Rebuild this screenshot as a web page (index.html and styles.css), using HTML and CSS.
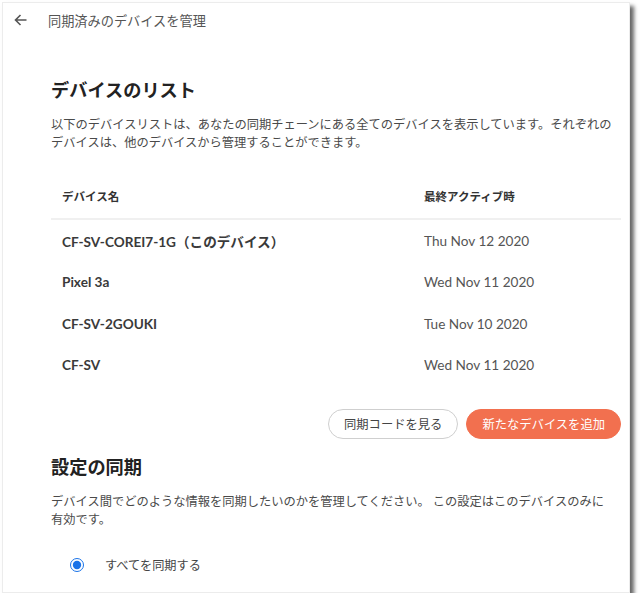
FILE: index.html
```html
<!DOCTYPE html>
<html lang="ja">
<head>
  <meta charset="UTF-8">
  <meta name="viewport" content="width=device-width, initial-scale=1.0">
  <title>同期済みのデバイスを管理</title>

  <link rel="stylesheet" href="styles.css">
</head>
<body>

  <div class="window">
    <header class="topbar">
      <svg class="back" width="13" height="12" viewBox="0 0 13 12">
        <path d="M12.5 6H1.5M6.5 1L1.5 6l5 5" fill="none" stroke="#555" stroke-width="1.6"/>
      </svg>
      <span class="topbar-title">同期済みのデバイスを管理</span>
    </header>

    <main class="content">
      <h2 class="section-title first">デバイスのリスト</h2>
      <p class="lead">以下のデバイスリストは、あなたの同期チェーンにある全てのデバイスを表示しています。それぞれのデバイスは、他のデバイスから管理することができます。</p>

      <table class="devices">
        <thead>
          <tr>
            <th class="col-name">デバイス名</th>
            <th>最終アクティブ時</th>
          </tr>
        </thead>
        <tbody>
          <tr>
            <td class="device-name">CF-SV-COREI7-1G（このデバイス）</td>
            <td class="device-date">Thu Nov 12 2020</td>
          </tr>
          <tr>
            <td class="device-name">Pixel 3a</td>
            <td class="device-date">Wed Nov 11 2020</td>
          </tr>
          <tr>
            <td class="device-name">CF-SV-2GOUKI</td>
            <td class="device-date">Tue Nov 10 2020</td>
          </tr>
          <tr>
            <td class="device-name">CF-SV</td>
            <td class="device-date">Wed Nov 11 2020</td>
          </tr>
        </tbody>
      </table>

      <div class="actions">
        <button class="btn btn-outline">同期コードを見る</button>
        <button class="btn btn-primary">新たなデバイスを追加</button>
      </div>

      <h2 class="section-title">設定の同期</h2>
      <p class="lead">デバイス間でどのような情報を同期したいのかを管理してください。 この設定はこのデバイスのみに有効です。</p>

      <label class="radio-row">
        <input type="radio" name="sync" checked>
        <span>すべてを同期する</span>
      </label>
    </main>
  </div>

</body>
</html>
```

FILE: styles.css
```css
body {
  font-family: 'Lato', 'Noto Sans CJK JP', sans-serif;
  background-color: #fff;
  margin: 0;
  padding: 0;
}

.window {
  box-sizing: border-box;
  width: 628px;
  height: 591px;
  margin: 2px 0 0 2px;
  border: 1px solid #ececec;
  background-color: #fff;
  box-shadow: 4px 4px 4px rgba(0, 0, 0, 0.6);
  overflow: hidden;
}

.topbar {
  display: flex;
  align-items: center;
  height: 34px;
  padding-left: 11px;
}

.back {
  display: block;
}

.topbar-title {
  margin-left: 21px;
  font-size: 13.2px;
  color: #555;
}

.content {
  padding: 0 8px 0 48px;
}

.section-title {
  margin: 16px 0 0;
  font-size: 18.2px;
  line-height: 24px;
  font-weight: bold;
  color: #222;
}

.section-title.first {
  margin-top: 41px;
}

.lead {
  max-width: 565px;
  margin: 14px 0 0;
  font-size: 12.25px;
  line-height: 18px;
  color: #4a4a4a;
}

.devices {
  width: 570px;
  margin-top: 22px;
  border-collapse: collapse;
}

.devices th {
  height: 44px;
  padding: 0 11px;
  text-align: left;
  font-size: 11.5px;
  font-weight: bold;
  color: #333;
  border-bottom: 2px solid #f0f0f0;
}

.devices th.col-name {
  width: 340px;
}

.devices td {
  height: 41.5px;
  padding: 0 11px;
}

.device-name {
  font-size: 13.6px;
  font-weight: bold;
  color: #3a3a3a;
}

.device-date {
  font-size: 13.6px;
  color: #555;
}

.actions {
  display: flex;
  justify-content: flex-end;
  gap: 8px;
  margin-top: 23px;
}

.btn {
  height: 30px;
  padding: 0 15px;
  border-radius: 15px;
  font-family: 'Lato', 'Noto Sans CJK JP', sans-serif;
  font-size: 12.3px;
  cursor: pointer;
}

.btn-outline {
  background-color: #fff;
  border: 1px solid #cfcfcf;
  color: #444;
}

.btn-primary {
  background-color: #f2704f;
  border: 1px solid #f2704f;
  color: #fff;
}

.radio-row {
  display: flex;
  align-items: center;
  gap: 21px;
  height: 24px;
  margin-top: 24px;
  padding-left: 19px;
  font-size: 12.2px;
  color: #444;
}

.radio-row input {
  width: 14px;
  height: 14px;
  margin: 0;
  accent-color: #1a73e8;
}
```
